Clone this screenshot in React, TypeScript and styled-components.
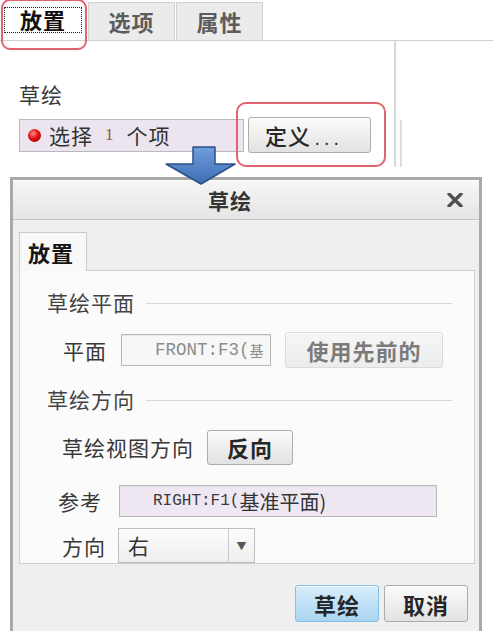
import React from 'react';
import styled, { createGlobalStyle } from 'styled-components';

const GlobalStyle = createGlobalStyle`
  html, body {
    margin: 0;
    padding: 0;
    background: #ffffff;
    overflow: hidden;
  }
  body {
    font-family: "Noto Sans CJK SC", "Noto Sans", sans-serif;
    color: #333;
  }
  * {
    box-sizing: border-box;
  }
`;

const Page = styled.div`
  width: 498px;
  height: 631px;
  overflow: hidden;
`;

/* ---------- top: feature panel ---------- */

const TopArea = styled.div`
  position: relative;
  height: 177px;
`;

const TabBar = styled.div`
  display: flex;
  align-items: flex-end;
  width: 493px;
  height: 41px;
  padding-left: 4px;
  border-bottom: 1px solid #d0d0d0;
`;

const ActiveTab = styled.div`
  position: relative;
  width: 78px;
  height: 41px;
  margin-right: 6px;
  background: #fff;
  padding-top: 8px;

  &::after {
    content: "";
    position: absolute;
    left: -3px;
    top: 0;
    width: 82px;
    height: 47px;
    border: 2px solid #e0646f;
    border-radius: 9px;
  }
`;

const FocusLabel = styled.div`
  height: 26px;
  border: 1.5px dotted #222;
  font-size: 22px;
  font-weight: 700;
  line-height: 22px;
  text-align: center;
  color: #111;
  letter-spacing: 1px;
`;

const Tab = styled.div`
  width: 87px;
  height: 38px;
  background: #ebebeb;
  border: 1px solid #d2d2d2;
  border-bottom: none;
  font-size: 22px;
  font-weight: 700;
  line-height: 36px;
  text-align: center;
  letter-spacing: 1px;
  color: #5c5c5c;

  & + & {
    margin-left: 1px;
  }
`;

const ContentRow = styled.div`
  display: flex;
`;

const FeaturePanel = styled.div`
  width: 396px;
  height: 126px;
  padding: 40px 0 0 19px;
  border-right: 2px solid #d8d8d8;
`;

const ScrollEdge = styled.div`
  width: 2px;
  height: 47px;
  margin: 79px 0 0 4px;
  background: #dedede;
`;

const Caption = styled.div`
  font-size: 21px;
  line-height: 26px;
  letter-spacing: 1px;
  color: #3a3a3a;
`;

const FieldRow = styled.div`
  display: flex;
  align-items: center;
  margin-top: 10px;
`;

const Collector = styled.div`
  display: flex;
  align-items: center;
  width: 225px;
  height: 33px;
  padding-left: 8px;
  background: #ece5ef;
  border: 1px solid #b9b9b9;
  font-size: 21px;
  letter-spacing: 1px;
  color: #333;
`;

const RedDot = styled.span`
  width: 13px;
  height: 13px;
  margin-right: 8px;
  border-radius: 50%;
  background: radial-gradient(circle at 40% 35%, #ff8a8a 0%, #e01010 45%, #8c0000 100%);
`;

const Digit = styled.span`
  margin: 0 12px 0 12px;
  font-family: "Liberation Serif", serif;
  font-size: 17px;
  color: #8a5a2e;
`;

const DefineWrap = styled.div`
  position: relative;
  margin-left: 4px;

  &::after {
    content: "";
    position: absolute;
    left: -12px;
    top: -15px;
    width: 146px;
    height: 61px;
    border: 2px solid #e0646f;
    border-radius: 10px;
  }
`;

const Button = styled.button<{ $w: number; $h: number; $tone?: 'normal' | 'primary' | 'disabled' }>`
  width: ${(p) => p.$w}px;
  height: ${(p) => p.$h}px;
  padding: 0;
  font-family: "Noto Sans CJK SC", "Noto Sans", sans-serif;
  font-size: 22px;
  font-weight: 700;
  letter-spacing: 1px;
  border-radius: 3px;
  border: 1px solid
    ${(p) => (p.$tone === 'primary' ? '#86bde3' : p.$tone === 'disabled' ? '#dadada' : '#acacac')};
  color: ${(p) => (p.$tone === 'disabled' ? '#7b7b7b' : '#262626')};
  background: ${(p) =>
    p.$tone === 'primary'
      ? 'linear-gradient(#d8eefb, #a9d5f2)'
      : p.$tone === 'disabled'
      ? 'linear-gradient(#f6f6f6, #ececec)'
      : 'linear-gradient(#fbfbfb, #e2e2e2)'};
  box-shadow: inset 0 1px 0 rgba(255, 255, 255, 0.8);
`;

const DefineButton = styled(Button)`
  font-weight: 500;
  text-align: left;
  padding-left: 16px;
`;

const Dots = styled.span`
  font-size: 16px;
  font-weight: 400;
  letter-spacing: 5px;
  margin-left: 4px;
`;

const ArrowOverlay = styled.svg`
  position: absolute;
  left: 164px;
  top: 146px;
  z-index: 2;
`;

/* ---------- dialog ---------- */

const Dialog = styled.div`
  width: 472px;
  height: 454px;
  margin-left: 10px;
  border: 3px solid #a9a9a9;
  border-bottom: none;
  background: #efefef;
`;

const TitleBar = styled.div`
  display: flex;
  align-items: center;
  height: 40px;
  border-top: 1px solid #fff;
  border-bottom: 1px solid #c6c6c6;
  background: linear-gradient(#f6f6f6, #e5e5e5);
`;

const Title = styled.div`
  flex: 1;
  text-align: center;
  font-size: 21px;
  font-weight: 700;
  letter-spacing: 1px;
  color: #333;
`;

const CloseIcon = styled.svg`
  margin-right: 16px;
`;

const DialogBody = styled.div`
  padding: 12px 3px 0 6px;
`;

const PanelTab = styled.div`
  position: relative;
  z-index: 1;
  width: 68px;
  height: 39px;
  margin-bottom: -1px;
  padding-left: 8px;
  background: #f8f8f8;
  border: 1px solid #c9c9c9;
  border-bottom: none;
  font-size: 22px;
  font-weight: 700;
  line-height: 38px;
  letter-spacing: 1px;
  color: #151515;
`;

const Panel = styled.div`
  width: 456px;
  padding: 16px 0 0 27px;
  background: #fbfbfb;
  border: 1px solid #cfcfcf;
`;

const SectionHeader = styled.div<{ $top?: number }>`
  display: flex;
  align-items: center;
  height: 30px;
  margin-top: ${(p) => p.$top ?? 0}px;
  font-size: 21px;
  letter-spacing: 1px;
  color: #444;

  &::after {
    content: "";
    flex: 1;
    height: 1px;
    margin: 2px 22px 0 11px;
    background: #d6d6d6;
  }
`;

const Row = styled.div<{ $top: number; $indent: number; $gap: number; $h: number }>`
  display: flex;
  align-items: center;
  gap: ${(p) => p.$gap}px;
  height: ${(p) => p.$h}px;
  margin-top: ${(p) => p.$top}px;
  padding-left: ${(p) => p.$indent}px;
`;

const Label = styled.span`
  font-size: 21px;
  letter-spacing: 1px;
  color: #383838;
  white-space: nowrap;
`;

const TextBox = styled.div<{ $w: number; $tint?: boolean }>`
  display: flex;
  align-items: center;
  width: ${(p) => p.$w}px;
  height: 32px;
  padding-left: 33px;
  overflow: hidden;
  white-space: nowrap;
  border: 1px solid #b8b8b8;
  background: ${(p) => (p.$tint ? '#efe8f3' : '#f7f7f7')};
  box-shadow: inset 0 1px 1px rgba(0, 0, 0, 0.06);
`;

const Mono = styled.span<{ $muted?: boolean }>`
  font-family: "Liberation Mono", "DejaVu Sans Mono", monospace;
  font-size: ${(p) => (p.$muted ? 17.5 : 16)}px;
  color: ${(p) => (p.$muted ? '#8c8c8c' : '#3a3a3a')};
`;

const CjkInField = styled.span<{ $muted?: boolean }>`
  font-size: ${(p) => (p.$muted ? 14 : 20)}px;
  color: ${(p) => (p.$muted ? '#8c8c8c' : '#333')};
`;

const Select = styled.div`
  display: flex;
  width: 137px;
  height: 35px;
  border: 1px solid #bdbdbd;
  background: linear-gradient(#fcfcfc, #efefef);
`;

const SelectValue = styled.div`
  flex: 1;
  padding-left: 9px;
  font-size: 21px;
  line-height: 32px;
  color: #333;
`;

const SelectArrow = styled.div`
  display: flex;
  align-items: center;
  justify-content: center;
  width: 26px;
  border-left: 1px solid #c9c9c9;
  font-size: 10px;
  color: #555;
`;

const Footer = styled.div`
  display: flex;
  justify-content: flex-end;
  gap: 5px;
  padding: 21px 8px 0 0;
`;

export default function App() {
  return (
    <Page>
      <GlobalStyle />
      <TopArea>
        <TabBar>
          <ActiveTab>
            <FocusLabel>放置</FocusLabel>
          </ActiveTab>
          <Tab>选项</Tab>
          <Tab>属性</Tab>
        </TabBar>
        <ContentRow>
          <FeaturePanel>
            <Caption>草绘</Caption>
            <FieldRow>
              <Collector>
                <RedDot />
                选择<Digit>1</Digit>个项
              </Collector>
              <DefineWrap>
                <DefineButton $w={123} $h={36}>
                  定义<Dots>...</Dots>
                </DefineButton>
              </DefineWrap>
            </FieldRow>
          </FeaturePanel>
          <ScrollEdge />
        </ContentRow>
        <ArrowOverlay width="74" height="40" viewBox="0 0 74 40">
          <defs>
            <linearGradient id="arrowFill" x1="0" y1="0" x2="0" y2="1">
              <stop offset="0" stopColor="#6f9ede" />
              <stop offset="1" stopColor="#3f6db3" />
            </linearGradient>
          </defs>
          <path
            d="M29 1 H51 V18 H71 L37 38 L2 18 H29 Z"
            fill="url(#arrowFill)"
            stroke="#2c4f86"
            strokeWidth="1.5"
            strokeLinejoin="round"
          />
        </ArrowOverlay>
      </TopArea>

      <Dialog>
        <TitleBar>
          <Title>草绘</Title>
          <CloseIcon width="16" height="14" viewBox="0 0 16 14">
            <path d="M2 1 L14 13 M14 1 L2 13" stroke="#505050" strokeWidth="3.4" strokeLinecap="round" />
          </CloseIcon>
        </TitleBar>
        <DialogBody>
          <PanelTab>放置</PanelTab>
          <Panel>
            <SectionHeader>草绘平面</SectionHeader>
            <Row $top={15} $indent={16} $gap={14} $h={36}>
              <Label>平面</Label>
              <TextBox $w={150}>
                <Mono $muted>FRONT:F3(</Mono>
                <CjkInField $muted>基</CjkInField>
              </TextBox>
              <Button $w={158} $h={36} $tone="disabled">
                使用先前的
              </Button>
            </Row>
            <SectionHeader $top={16}>草绘方向</SectionHeader>
            <Row $top={16} $indent={15} $gap={13} $h={34}>
              <Label>草绘视图方向</Label>
              <Button $w={86} $h={35}>
                反向
              </Button>
            </Row>
            <Row $top={21} $indent={11} $gap={17} $h={32}>
              <Label>参考</Label>
              <TextBox $w={318} $tint>
                <Mono>RIGHT:F1(</Mono>
                <CjkInField>基准平面)</CjkInField>
              </TextBox>
            </Row>
            <Row $top={11} $indent={15} $gap={12} $h={35}>
              <Label>方向</Label>
              <Select>
                <SelectValue>右</SelectValue>
                <SelectArrow>▼</SelectArrow>
              </Select>
            </Row>
          </Panel>
          <Footer>
            <Button $w={84} $h={37} $tone="primary">
              草绘
            </Button>
            <Button $w={84} $h={37}>
              取消
            </Button>
          </Footer>
        </DialogBody>
      </Dialog>
    </Page>
  );
}
